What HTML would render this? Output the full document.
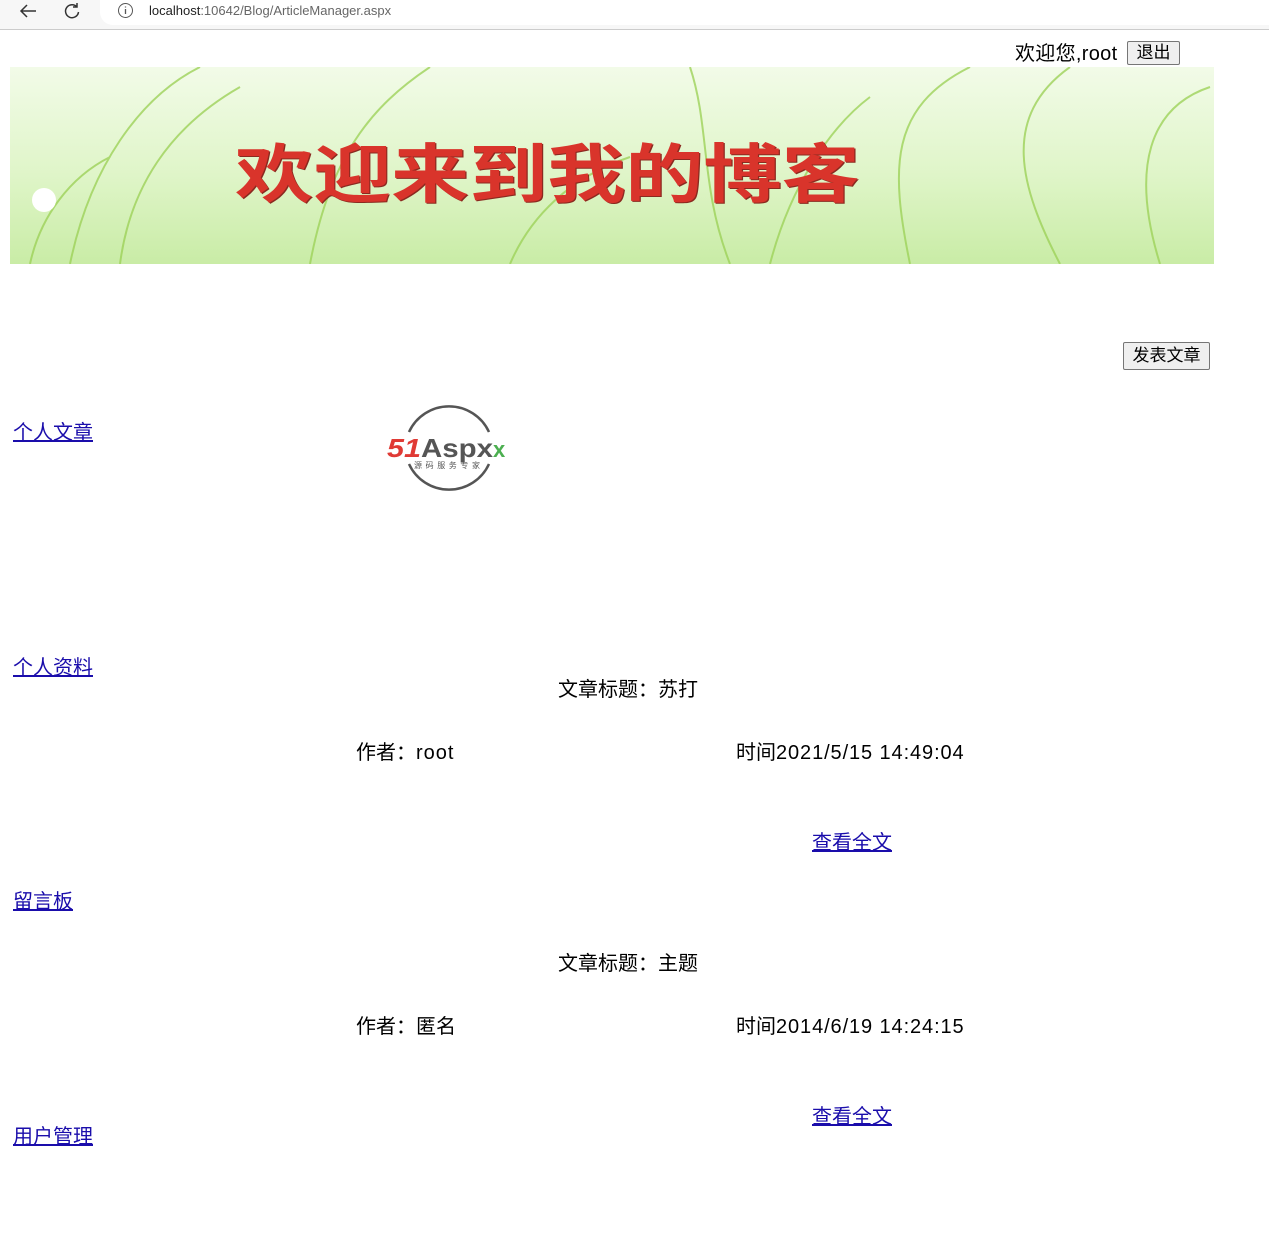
<!DOCTYPE html>
<html><head><meta charset="utf-8"><style>
body{margin:0;width:1269px;height:1253px;background:#fff;font-family:"Liberation Sans","Noto Sans CJK SC",sans-serif;position:relative;overflow:hidden;color:#000}
.a{position:absolute;white-space:nowrap;font-size:20px;line-height:24px}
a{color:#1a0dab;text-decoration:underline}
.btn{position:absolute;border:1px solid #767676;background:#efefef;border-radius:2px;font-size:17px;line-height:22px;text-align:center;font-family:"Liberation Sans","Noto Sans CJK SC",sans-serif}
</style></head><body>
<div style="position:absolute;left:0;top:0;width:1269px;height:29px;background:#f7f7f7;border-bottom:1px solid #ccc"></div>
<div style="position:absolute;left:100px;top:0;width:1169px;height:25px;background:#fff;border-radius:0 0 0 13px"></div>
<svg style="position:absolute;left:18px;top:3px" width="20" height="16"><path d="M18 8H3M9 2L3 8l6 6" stroke="#333" stroke-width="1.5" fill="none"/></svg>
<svg style="position:absolute;left:63px;top:2px" width="18" height="18"><path d="M14 5A6.5 6.5 0 1 0 15.5 10M14 1v4h-4" stroke="#333" stroke-width="1.5" fill="none"/></svg>
<svg style="position:absolute;left:117px;top:2px" width="17" height="17"><circle cx="8.5" cy="8.5" r="7" stroke="#555" fill="none"/><path d="M8.5 7v5M8.5 4.5v1" stroke="#555" stroke-width="1.3"/></svg>
<div class="a" style="left:149px;top:2px;font-size:13px;line-height:18px;color:#222">localhost<span style="color:#666">:10642/Blog/ArticleManager.aspx</span></div>
<div class="a" style="left:1015px;top:42px;letter-spacing:0.3px">欢迎您,root</div>
<div class="btn" style="left:1127px;top:41px;width:51px;height:22px">退出</div>
<div style="position:absolute;left:10px;top:67px;width:1204px;height:197px;background:linear-gradient(180deg,#f2fbe8 0%,#dff5c8 55%,#c9eca6 100%);overflow:hidden">
<svg width="1204" height="197" style="position:absolute;left:0;top:0"><g stroke="#9ed25a" stroke-width="2" fill="none" opacity=".8">
<path d="M60 197C80 100 130 30 190 0"/><path d="M110 197C120 120 160 60 230 20"/><path d="M300 197C320 90 360 40 420 0"/><path d="M900 197C880 100 880 40 960 0"/><path d="M1050 197C1010 120 990 50 1060 0"/><path d="M1150 197C1120 100 1140 40 1200 20"/><path d="M760 197C780 120 820 60 860 30"/><path d="M20 197C30 150 60 110 100 90"/><path d="M500 197C520 150 560 110 620 90"/><path d="M680 0C700 60 690 120 720 197"/></g>
<circle cx="34" cy="133" r="12" fill="#fff"/></svg>
<div style="position:absolute;left:225px;top:68px;font-size:64px;font-weight:bold;color:#d9342b;line-height:70px;font-family:'Noto Sans CJK SC',sans-serif;text-shadow:1px 1px 0 #8a2a20;transform:scaleX(1.22);transform-origin:left top">欢迎来到我的博客</div>
</div>
<div class="btn" style="left:1123px;top:342px;width:85px;height:26px;line-height:26px">发表文章</div>
<a class="a" style="left:13px;top:421px" href="#x">个人文章</a>
<a class="a" style="left:13px;top:656px" href="#x">个人资料</a>
<a class="a" style="left:13px;top:890px" href="#x">留言板</a>
<a class="a" style="left:13px;top:1125px" href="#x">用户管理</a>
<svg style="position:absolute;left:386px;top:402px" width="126" height="92">
<path d="M23 30A44 44 0 0 1 103 30M103 62A44 44 0 0 1 23 62" stroke="#555" stroke-width="2.5" fill="none"/>
<text x="1" y="55" font-family="Liberation Sans" font-weight="bold" font-style="italic" font-size="26" fill="#e03a35" textLength="34" lengthAdjust="spacingAndGlyphs">51</text>
<text x="35" y="55" font-family="Liberation Sans" font-weight="bold" font-size="26" fill="#555" textLength="72" lengthAdjust="spacingAndGlyphs">Aspx</text>
<text x="107" y="55" font-family="Liberation Sans" font-weight="bold" font-size="22" fill="#4caf50">x</text>
<text x="28" y="66" font-family="Noto Sans CJK SC" font-size="8" fill="#555" textLength="66">源码服务专家</text>
</svg>
<div class="a" style="left:558px;top:678px">文章标题：苏打</div>
<div class="a" style="left:356px;top:741px">作者：<span style="letter-spacing:1px">root</span></div>
<div class="a" style="left:736px;top:741px">时间<span style="letter-spacing:0.9px">2021/5/15 14:49:04</span></div>
<a class="a" style="left:812px;top:831px" href="#x">查看全文</a>
<div class="a" style="left:558px;top:952px">文章标题：主题</div>
<div class="a" style="left:356px;top:1015px">作者：匿名</div>
<div class="a" style="left:736px;top:1015px">时间<span style="letter-spacing:0.9px">2014/6/19 14:24:15</span></div>
<a class="a" style="left:812px;top:1105px" href="#x">查看全文</a>
</body></html>
